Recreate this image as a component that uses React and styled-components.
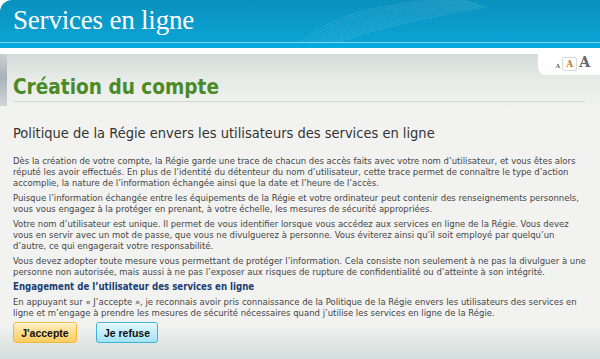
import React from "react";
import styled, { createGlobalStyle } from "styled-components";

const GlobalStyle = createGlobalStyle`
  html, body {
    margin: 0;
    padding: 0;
    background: #ffffff;
  }
  #root {
    width: 600px;
    height: 359px;
    overflow: hidden;
  }
`;

const Page = styled.div`
  display: flex;
  flex-direction: column;
  width: 600px;
  height: 359px;
  background: #ffffff;
`;

const Header = styled.header`
  position: relative;
  height: 43px;
  box-sizing: border-box;
  border-top-left-radius: 12px;
  overflow: hidden;
  background: linear-gradient(180deg, #0a90bd 0%, #0b9ccb 60%, #0aa3d4 100%);
  border-bottom: 1px solid #7fd4f0;
  display: flex;
  align-items: flex-end;
  padding: 0 0 8px 13px;
  h1 {
    margin: 0;
    font-family: "Liberation Serif", "DejaVu Serif", serif;
    font-weight: normal;
    font-size: 27px;
    line-height: 27px;
    color: #ffffff;
    letter-spacing: -0.2px;
    position: relative;
    z-index: 1;
  }
`;

const Swoosh = styled.svg`
  position: absolute;
  left: 0;
  top: 0;
  width: 600px;
  height: 43px;
`;

const Band = styled.div`
  height: 5px;
  background: #06a9de;
  margin-bottom: 6px;
`;

const Content = styled.main`
  position: relative;
  flex: 1;
  padding: 0 15px 0 13px;
  background: linear-gradient(
    180deg,
    #d2dcd8 0px,
    #e6ebe8 25px,
    #f2f3f1 55px,
    #f2f3f1 270px,
    #dfe6e4 290px,
    #d4dedc 305px
  );
`;

const EdgeMark = styled.div`
  position: absolute;
  left: 0;
  top: 0;
  width: 7px;
  height: 52px;
  background: linear-gradient(180deg, #c8cccc 0%, #9aa4b0 45%, #c8ced2 100%);
  opacity: 0.8;
`;

const Title = styled.h2`
  margin: 0;
  padding-top: 19px;
  height: 28px;
  border-bottom: 1px solid #d4d8d4;
  font-family: "DejaVu Sans Condensed", "DejaVu Sans", sans-serif;
  font-weight: bold;
  font-size: 20.6px;
  line-height: 28px;
  color: #4a8a27;
`;

const FontSizer = styled.div`
  position: absolute;
  top: 0;
  right: 0;
  width: 62px;
  height: 21px;
  background: #ffffff;
  border-bottom-left-radius: 8px;
  display: flex;
  align-items: flex-end;
  justify-content: flex-end;
  gap: 2px;
  padding-right: 10px;
  box-sizing: border-box;
  padding-bottom: 6px;
`;

const SizeA = styled.span`
  font-family: "DejaVu Serif", "Liberation Serif", serif;
  font-weight: bold;
  font-size: ${(p) => p.size}px;
  line-height: 1;
  color: ${(p) => (p.active ? "#c57b20" : "#666666")};
  ${(p) =>
    p.active &&
    `
    border: 1px solid #d8d8d8;
    border-radius: 2px;
    padding: 2px 3px 1px;
    margin-bottom: -2px;
  `}
`;

const Heading = styled.h3`
  margin: 23px 0 13px;
  font-family: "DejaVu Sans Condensed", "DejaVu Sans", sans-serif;
  font-weight: normal;
  font-size: 14.5px;
  line-height: 17px;
  color: #333333;
`;

const Para = styled.p`
  margin: 0 0 4px;
  font-family: "DejaVu Sans Condensed", "DejaVu Sans", sans-serif;
  font-size: 9.45px;
  line-height: 11px;
  color: #454545;
  white-space: nowrap;
`;

const SubHeading = styled.h4`
  margin: 0 0 4px;
  font-family: "DejaVu Sans Condensed", "DejaVu Sans", sans-serif;
  font-weight: bold;
  font-size: 9.6px;
  line-height: 11px;
  color: #1c3d72;
`;

const Actions = styled.div`
  display: flex;
  gap: 19px;
  margin-top: 0;
`;

const Button = styled.button`
  box-sizing: border-box;
  height: 21px;
  padding: 0;
  width: ${(p) => (p.variant === "accept" ? 64 : 62)}px;
  border-radius: 3px;
  font-family: "Liberation Sans", Arial, sans-serif;
  font-weight: bold;
  font-size: 10.5px;
  color: #111111;
  cursor: pointer;
  border: 1px solid ${(p) => (p.variant === "accept" ? "#f1b93a" : "#3fb2d9")};
  background: ${(p) =>
    p.variant === "accept"
      ? "linear-gradient(180deg, #fff1c4 0%, #fddc8c 50%, #fbcd63 100%)"
      : "linear-gradient(180deg, #e2f7fc 0%, #c2eef9 50%, #a4e3f4 100%)"};
  box-shadow: inset 0 1px 0 rgba(255, 255, 255, 0.7);
`;

export default function App() {
  return (
    <>
      <GlobalStyle />
      <Page>
        <Header>
          <Swoosh viewBox="0 0 600 43" aria-hidden="true">
            {[0, 1, 2, 3, 4, 5, 6, 7, 8, 9].map((i) => (
              <path
                key={i}
                d={`M ${300 + i * 4} 43 Q ${340 + i * 6} ${4 + i * 2} ${460 + i * 3} ${-2 + i}`}
                stroke="#ffffff"
                strokeOpacity="0.12"
                strokeWidth="1"
                fill="none"
              />
            ))}
          </Swoosh>
          <h1>Services en ligne</h1>
        </Header>
        <Band />
        <Content>
          <EdgeMark />
          <FontSizer>
            <SizeA size={6}>A</SizeA>
            <SizeA size={9} active>
              A
            </SizeA>
            <SizeA size={14}>A</SizeA>
          </FontSizer>
          <Title>Création du compte</Title>
          <Heading>Politique de la Régie envers les utilisateurs des services en ligne</Heading>
          <Para>
            Dès la création de votre compte, la Régie garde une trace de chacun des accès faits avec votre nom d’utilisateur, et vous êtes alors
            <br />
            réputé les avoir effectués. En plus de l’identité du détenteur du nom d’utilisateur, cette trace permet de connaître le type d’action
            <br />
            accomplie, la nature de l’information échangée ainsi que la date et l’heure de l’accès.
          </Para>
          <Para>
            Puisque l’information échangée entre les équipements de la Régie et votre ordinateur peut contenir des renseignements personnels,
            <br />
            vous vous engagez à la protéger en prenant, à votre échelle, les mesures de sécurité appropriées.
          </Para>
          <Para>
            Votre nom d’utilisateur est unique. Il permet de vous identifier lorsque vous accédez aux services en ligne de la Régie. Vous devez
            <br />
            vous en servir avec un mot de passe, que vous ne divulguerez à personne. Vous éviterez ainsi qu’il soit employé par quelqu’un
            <br />
            d’autre, ce qui engagerait votre responsabilité.
          </Para>
          <Para>
            Vous devez adopter toute mesure vous permettant de protéger l’information. Cela consiste non seulement à ne pas la divulguer à une
            <br />
            personne non autorisée, mais aussi à ne pas l’exposer aux risques de rupture de confidentialité ou d’atteinte à son intégrité.
          </Para>
          <SubHeading>Engagement de l’utilisateur des services en ligne</SubHeading>
          <Para>
            En appuyant sur « J’accepte », je reconnais avoir pris connaissance de la Politique de la Régie envers les utilisateurs des services en
            <br />
            ligne et m’engage à prendre les mesures de sécurité nécessaires quand j’utilise les services en ligne de la Régie.
          </Para>
          <Actions>
            <Button variant="accept">J'accepte</Button>
            <Button variant="refuse">Je refuse</Button>
          </Actions>
        </Content>
      </Page>
    </>
  );
}
